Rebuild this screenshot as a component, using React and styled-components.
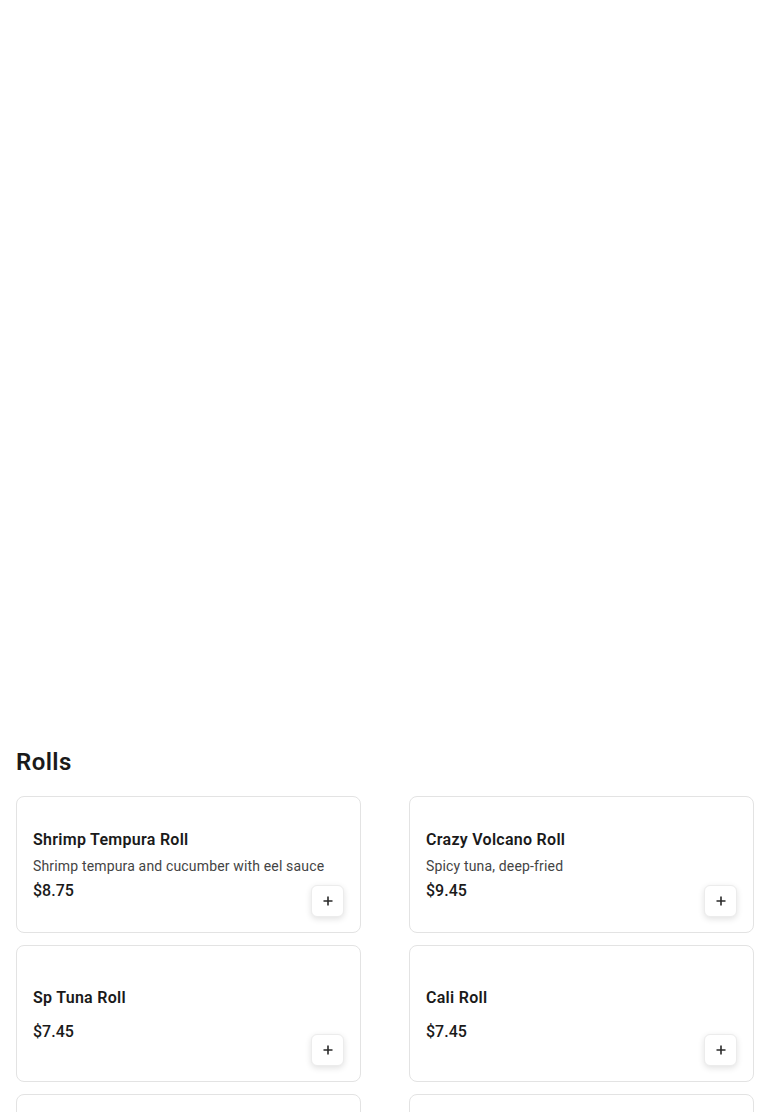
import React from 'react';
import styled, { createGlobalStyle } from 'styled-components';

const GlobalStyle = createGlobalStyle`
  html, body {
    margin: 0;
    padding: 0;
    background: #fff;
  }
  body {
    font-family: Roboto, "Liberation Sans", Arial, sans-serif;
    color: #1a1a1a;
  }
`;

const Page = styled.div`
  display: flex;
  flex-direction: column;
`;

const Hero = styled.div`
  height: 740px;
  background: #fff;
`;

const Section = styled.section`
  padding: 0 16px;
`;

const SectionTitle = styled.h2`
  font-size: 24px;
  line-height: 32px;
  font-weight: 600;
  letter-spacing: 0.4px;
  color: #1a1a1a;
  margin: 6px 0 18px;
`;

const Grid = styled.div`
  display: grid;
  grid-template-columns: 1fr 1fr;
  column-gap: 48px;
  row-gap: 12px;
`;

const Card = styled.div`
  display: grid;
  grid-template-areas: 'stack';
  height: 137px;
  box-sizing: border-box;
  border: 1px solid #e3e3e3;
  border-radius: 8px;
  background: #fff;
  padding: 0 16px 15px;
`;

const Details = styled.div`
  grid-area: stack;
  align-self: center;
  display: flex;
  flex-direction: column;
  margin-bottom: -17px;
`;

const ItemName = styled.h3`
  font-size: 16px;
  line-height: 24px;
  font-weight: 600;
  letter-spacing: 0.28px;
  color: #1a1a1a;
  margin: 0;
`;

const ItemDescription = styled.p`
  font-size: 14px;
  line-height: 20px;
  letter-spacing: 0.16px;
  color: #444;
  margin: 4px 0 0;
`;

const ItemPrice = styled.p`
  font-size: 16px;
  line-height: 24px;
  font-weight: 500;
  color: #1a1a1a;
  margin: ${({ $tight }) => ($tight ? '3px 0 0' : '10px 0 0')};
`;

const AddButton = styled.button`
  grid-area: stack;
  justify-self: end;
  align-self: end;
  width: 33px;
  height: 32px;
  display: flex;
  align-items: center;
  justify-content: center;
  padding: 0;
  border: 1px solid #ececec;
  border-radius: 6px;
  background: #fff;
  color: #2a2a2a;
  box-shadow: 0 2px 6px rgba(0, 0, 0, 0.12);
  cursor: pointer;
`;

const PlusIcon = () => (
  <svg width="12" height="12" viewBox="0 0 12 12" fill="none">
    <path d="M6 1.5v9M1.5 6h9" stroke="currentColor" strokeWidth="1.6" />
  </svg>
);

const rolls = [
  { name: 'Shrimp Tempura Roll', description: 'Shrimp tempura and cucumber with eel sauce', price: '$8.75' },
  { name: 'Crazy Volcano Roll', description: 'Spicy tuna, deep-fried', price: '$9.45' },
  { name: 'Sp Tuna Roll', price: '$7.45' },
  { name: 'Cali Roll', price: '$7.45' },
  { name: 'Philly Roll', price: '$7.95' },
  { name: 'Eel Avocado Roll', price: '$8.25' },
];

const MenuCard = ({ name, description, price }) => (
  <Card>
    <Details>
      <ItemName>{name}</ItemName>
      {description && <ItemDescription>{description}</ItemDescription>}
      <ItemPrice $tight={!!description}>{price}</ItemPrice>
    </Details>
    <AddButton aria-label={`Add ${name}`}>
      <PlusIcon />
    </AddButton>
  </Card>
);

export default function App() {
  return (
    <Page>
      <GlobalStyle />
      <Hero />
      <Section>
        <SectionTitle>Rolls</SectionTitle>
        <Grid>
          {rolls.map((roll) => (
            <MenuCard key={roll.name} {...roll} />
          ))}
        </Grid>
      </Section>
    </Page>
  );
}
